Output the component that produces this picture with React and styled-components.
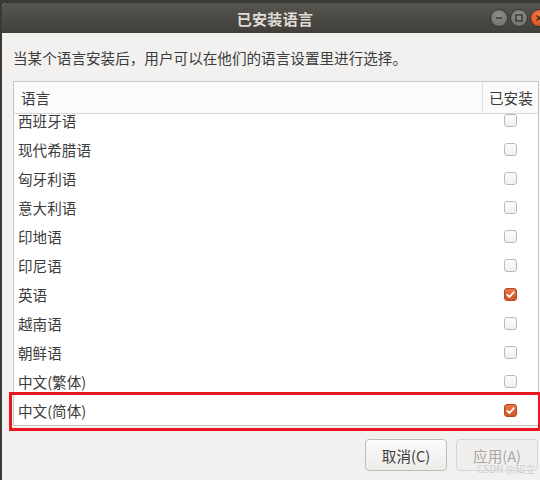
import React from "react"
import styled, { createGlobalStyle } from "styled-components"

const GlobalStyle = createGlobalStyle`
  html, body {
    margin: 0;
    padding: 0;
    background: #3a3935;
    overflow: hidden;
  }
  body {
    font-family: "Noto Sans CJK SC", "Noto Sans", sans-serif;
  }
`

const Window = styled.div`
  position: relative;
  margin: 3px 0 0 2px;
  width: 546px;
  height: 477px;
  background: #f2f1f0;
  display: flex;
  flex-direction: column;
  border-radius: 4px 4px 0 0;
  overflow: hidden;
`

const TitleBar = styled.div`
  position: relative;
  height: 30px;
  flex: none;
  background: linear-gradient(#57554f, #403f3a);
  display: flex;
  align-items: center;
  justify-content: center;
`

const Title = styled.div`
  color: #e0ddd6;
  font-size: 15px;
  font-weight: 700;
  letter-spacing: 0.3px;
`

const Controls = styled.div`
  position: absolute;
  right: 0;
  top: 6px;
  display: flex;
  gap: 2px;
`

const CircleBtn = styled.div`
  width: 18px;
  height: 18px;
  border-radius: 50%;
  box-sizing: border-box;
  border: 1px solid #36352f;
  background: ${(p) =>
    p.$close
      ? "radial-gradient(circle at 50% 35%, #f27a45, #d9461b)"
      : "radial-gradient(circle at 50% 35%, #8e8d88, #6d6c67)"};
  display: flex;
  align-items: center;
  justify-content: center;
`

const Body = styled.div`
  flex: 1;
  display: flex;
  flex-direction: column;
  padding: 0 9px 0 11px;
`

const Label = styled.div`
  margin-top: 14px;
  line-height: 22px;
  font-size: 14.6px;
  color: #3c3c3c;
`

const Frame = styled.div`
  position: relative;
  margin-top: 12px;
  height: 345px;
  box-sizing: border-box;
  border: 1px solid #c9c7c3;
  background: #ffffff;
  display: flex;
  flex-direction: column;
`

const Header = styled.div`
  height: 32px;
  flex: none;
  box-sizing: border-box;
  border-bottom: 1px solid #d8d6d2;
  background: #fbfbfb;
  display: grid;
  grid-template-columns: 1fr 56px;
`

const HeadCell = styled.div`
  display: flex;
  align-items: center;
  padding-left: ${(p) => p.$pad || 7}px;
  font-size: 14.6px;
  color: #3c3c3c;
  border-left: ${(p) => (p.$sep ? "1px solid #e0deda" : "none")};
`

const Viewport = styled.div`
  flex: 1;
  overflow: hidden;
`

const Rows = styled.div`
  margin-top: -8px;
`

const Row = styled.div`
  height: 29px;
  display: grid;
  grid-template-columns: 1fr 56px;
  align-items: center;
`

const Name = styled.div`
  padding-left: 4px;
  font-size: 14.6px;
  color: #3c3c3c;
`

const CheckCell = styled.div`
  display: flex;
  justify-content: center;
`

const Box = styled.div`
  width: 13px;
  height: 13px;
  box-sizing: border-box;
  border-radius: 3px;
  border: 1px solid ${(p) => (p.$on ? "#b5461c" : "#bcbab6")};
  background: ${(p) =>
    p.$on
      ? "linear-gradient(#ec7444, #d0552a)"
      : "linear-gradient(#fdfdfd, #f1f0ef)"};
  display: flex;
  align-items: center;
  justify-content: center;
`

const Annotation = styled.div`
  position: absolute;
  left: -5px;
  right: -3px;
  bottom: -6px;
  height: 39px;
  box-sizing: border-box;
  border: 3px solid #e8161f;
  pointer-events: none;
`

const Footer = styled.div`
  margin-top: 13px;
  display: flex;
  justify-content: flex-end;
  gap: 9px;
  padding-right: 1px;
`

const Button = styled.div`
  width: 82px;
  height: 32px;
  box-sizing: border-box;
  border-radius: 4px;
  border: 1px solid ${(p) => (p.$disabled ? "#d6d4d0" : "#c0bdb8")};
  background: ${(p) =>
    p.$disabled ? "#f0efee" : "linear-gradient(#fbfbfa, #edecea)"};
  color: ${(p) => (p.$disabled ? "#a9a7a3" : "#3c3c3c")};
  font-size: 14.6px;
  display: flex;
  align-items: center;
  justify-content: center;
`

const Watermark = styled.div`
  position: absolute;
  right: 13px;
  bottom: 4px;
  font-size: 10px;
  color: #c9c9c9;
  text-shadow: 0 0 1px #ffffff;
  font-family: "Noto Sans CJK SC", "Noto Sans", sans-serif;
`

const languages = [
  ["西班牙语", false],
  ["现代希腊语", false],
  ["匈牙利语", false],
  ["意大利语", false],
  ["印地语", false],
  ["印尼语", false],
  ["英语", true],
  ["越南语", false],
  ["朝鲜语", false],
  ["中文(繁体)", false],
  ["中文(简体)", true],
]

const Check = () => (
  <svg width="11" height="11" viewBox="0 0 11 11">
    <path
      d="M2.3 5.8 L4.5 8 L8.8 3.2"
      fill="none"
      stroke="#ffffff"
      strokeWidth="1.8"
      strokeLinecap="round"
      strokeLinejoin="round"
    />
  </svg>
)

const App = () => (
  <>
    <GlobalStyle />
    <Window>
      <TitleBar>
        <Title>已安装语言</Title>
        <Controls>
          <CircleBtn>
            <svg width="10" height="10" viewBox="0 0 10 10">
              <path d="M2 5 H8" stroke="#3a3935" strokeWidth="1.6" />
            </svg>
          </CircleBtn>
          <CircleBtn>
            <svg width="10" height="10" viewBox="0 0 10 10">
              <rect x="2" y="2" width="6" height="6" fill="none" stroke="#3a3935" strokeWidth="1.4" />
            </svg>
          </CircleBtn>
          <CircleBtn $close>
            <svg width="10" height="10" viewBox="0 0 10 10">
              <path d="M2.5 2.5 L7.5 7.5 M7.5 2.5 L2.5 7.5" stroke="#4a2a1a" strokeWidth="1.4" />
            </svg>
          </CircleBtn>
        </Controls>
      </TitleBar>
      <Body>
        <Label>当某个语言安装后，用户可以在他们的语言设置里进行选择。</Label>
        <Frame>
          <Header>
            <HeadCell>语言</HeadCell>
            <HeadCell $sep $pad={6}>已安装</HeadCell>
          </Header>
          <Viewport>
            <Rows>
              {languages.map(([name, on]) => (
                <Row key={name}>
                  <Name>{name}</Name>
                  <CheckCell>
                    <Box $on={on}>{on && <Check />}</Box>
                  </CheckCell>
                </Row>
              ))}
            </Rows>
          </Viewport>
          <Annotation />
        </Frame>
        <Footer>
          <Button>取消(C)</Button>
          <Button $disabled>应用(A)</Button>
        </Footer>
      </Body>
      <Watermark>CSDN @知立</Watermark>
    </Window>
  </>
)

export default App
